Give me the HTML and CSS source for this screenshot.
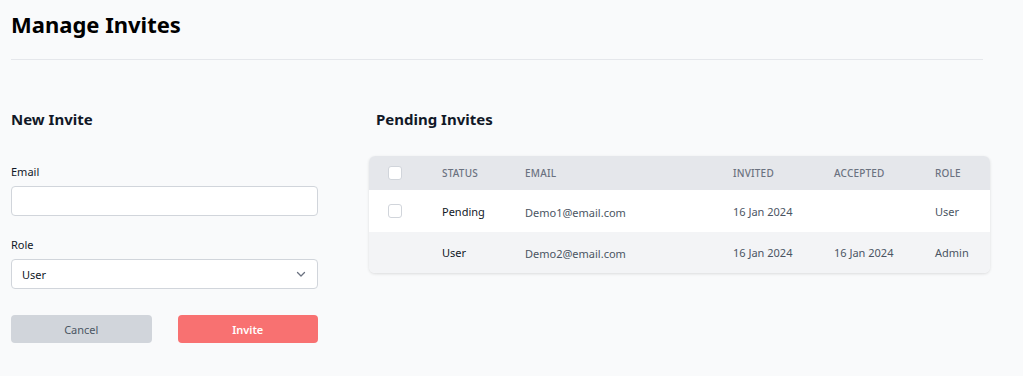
FILE: index.html
```html
<!DOCTYPE html>
<html lang="en">

<head>
  <meta charset="UTF-8">
  <meta name="viewport" content="width=device-width, initial-scale=1.0">
  <title>Manage Invites</title>
  <link rel="stylesheet" href="styles.css">
</head>

<body>
  <div class="page">
    <h1>Manage Invites</h1>

    <div class="content">
      <!-- New invite form -->
      <div class="new-invite">
        <h2>New Invite</h2>
        <div class="form-group">
          <label for="email">Email</label>
          <input type="text" id="email">
        </div>
        <div class="form-group">
          <label for="role">Role</label>
          <div class="select">
            <span>User</span>
            <svg width="12" height="12" viewBox="0 0 12 12"><path d="M2.5 4.5 6 8l3.5-3.5" fill="none" stroke="#6b7280" stroke-width="1.3" stroke-linecap="round" stroke-linejoin="round"/></svg>
          </div>
        </div>
        <div class="actions">
          <button class="btn-cancel">Cancel</button>
          <button class="btn-invite">Invite</button>
        </div>
      </div>

      <!-- Pending invites table -->
      <div class="pending">
        <h2>Pending Invites</h2>
        <div class="table">
          <div class="row head">
            <span class="check"></span>
            <span>Status</span>
            <span>Email</span>
            <span>Invited</span>
            <span>Accepted</span>
            <span>Role</span>
          </div>
          <div class="row">
            <span class="check"></span>
            <span class="status">Pending</span>
            <span class="mail">Demo1@email.com</span>
            <span>16 Jan 2024</span>
            <span></span>
            <span>User</span>
          </div>
          <div class="row alt">
            <span></span>
            <span class="status">User</span>
            <span class="mail">Demo2@email.com</span>
            <span>16 Jan 2024</span>
            <span>16 Jan 2024</span>
            <span>Admin</span>
          </div>
        </div>
      </div>
    </div>
  </div>
</body>

</html>
```

FILE: styles.css
```css
body {
  font-family: "Noto Sans", Arial, sans-serif;
  margin: 0;
  background-color: #f9fafb;
  color: #111827;
}

.page {
  padding: 8px 0 0 11px;
}

h1 {
  margin: 0;
  width: 972px;
  font-size: 22px;
  line-height: 32px;
  font-weight: 700;
  color: #000;
  padding-bottom: 19px;
  border-bottom: 1px solid #e5e7eb;
}

h2 {
  margin: 0;
  font-size: 15px;
  line-height: 22px;
  font-weight: 700;
}

.content {
  display: flex;
  gap: 58px;
  padding-top: 48px;
}

.new-invite {
  width: 307px;
}

.form-group {
  margin-top: 34px;
}

.form-group + .form-group {
  margin-top: 21px;
}

label {
  display: block;
  font-size: 11px;
  line-height: 16px;
  margin-bottom: 6px;
}

input[type="text"],
.select {
  width: 100%;
  height: 30px;
  border: 1px solid #d1d5db;
  border-radius: 4px;
  background: white;
  box-sizing: border-box;
}

.select {
  display: flex;
  align-items: center;
  justify-content: space-between;
  padding: 0 10px;
  font-size: 11px;
}

.actions {
  display: flex;
  gap: 26px;
  margin-top: 26px;
}

.actions button {
  flex: 1;
  height: 28px;
  border: none;
  border-radius: 4px;
  font-family: inherit;
  font-size: 11px;
}

.btn-cancel {
  background: #d1d5db;
  color: #4b5563;
}

.btn-invite {
  background: #f87171;
  color: white;
  font-weight: 600;
}

.pending {
  width: 621px;
  margin-left: -7px;
}

.pending h2 {
  margin-left: 7px;
}

.table {
  margin-top: 26px;
  border-radius: 6px;
  overflow: hidden;
  box-shadow: 0 1px 3px rgba(0, 0, 0, 0.12);
}

.row {
  display: grid;
  grid-template-columns: 54px 83px 208px 101px 101px 55px;
  align-items: center;
  padding-left: 19px;
  height: 42px;
  font-size: 11px;
  color: #4b5563;
  background: white;
}

.row.head {
  height: 34px;
  background: #e5e7eb;
  font-size: 10px;
  text-transform: uppercase;
  letter-spacing: 0.2px;
  color: #6b7280;
  font-weight: 500;
}

.row.alt {
  height: 41px;
  background: #f3f4f6;
}

.row .mail {
  padding-top: 2px;
}

.check {
  width: 12px;
  height: 12px;
  border: 1px solid #d1d5db;
  border-radius: 3px;
  background: white;
}

.status {
  color: #111827;
}
```
